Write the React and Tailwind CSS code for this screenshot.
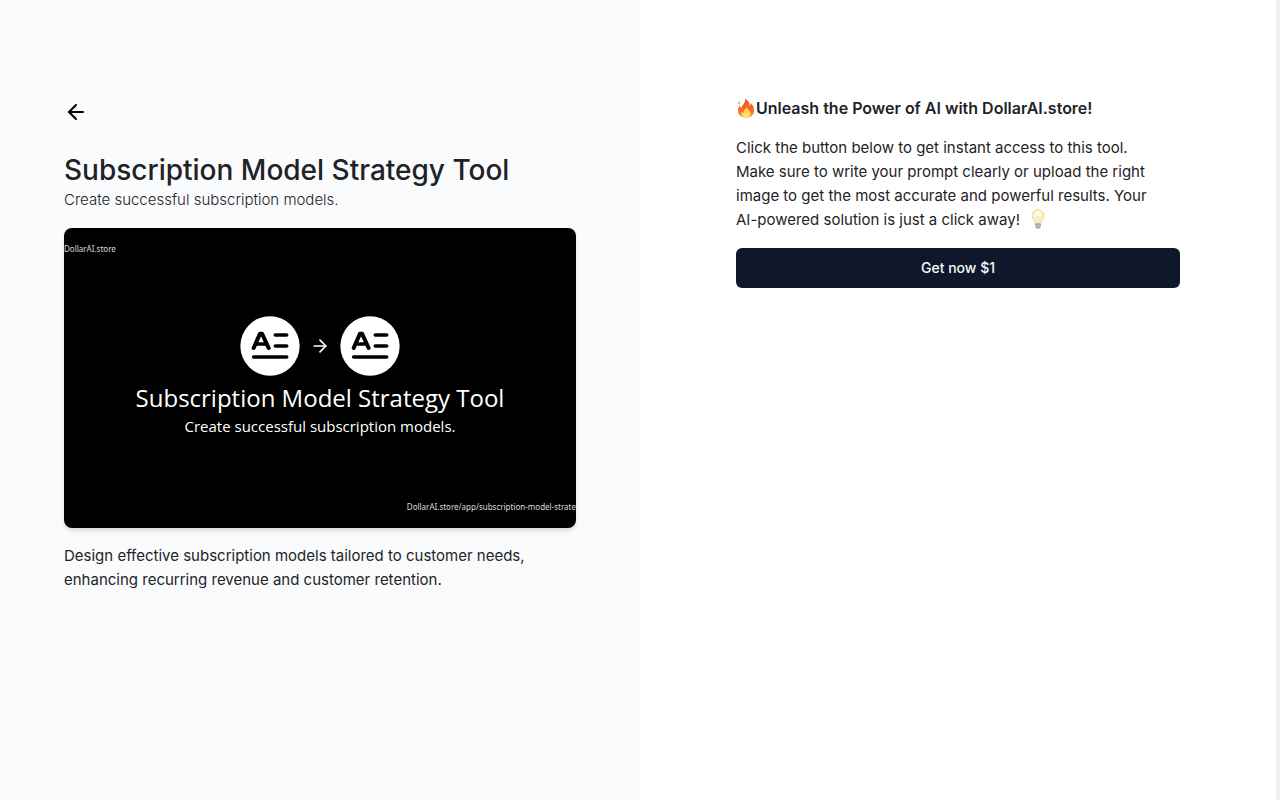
import React from "react";
import { ArrowLeft, ArrowRight } from "lucide-react";

function TextBadge() {
  return (
    <svg viewBox="0 0 180 180" className="size-[60px]" aria-hidden="true">
      <circle cx="90" cy="90" r="89" fill="#fff" />
      <g fill="none" stroke="#000" strokeWidth="11" strokeLinecap="round" strokeLinejoin="round">
        <path d="M41 96 L60 53 H66 L86 96" strokeWidth="12" />
        <path d="M48 84 H79" strokeWidth="10" />
        <path d="M106 57 H140 M106 90 H140 M41 123 H140" />
      </g>
    </svg>
  );
}

function Fire() {
  return (
    <svg viewBox="0 0 40 40" className="size-5 shrink-0" role="img" aria-label="fire">
      <defs>
        <linearGradient id="flame" x1="0" y1="0" x2="0" y2="1">
          <stop offset="0" stopColor="#e8502a" />
          <stop offset="0.6" stopColor="#f9682a" />
          <stop offset="1" stopColor="#fb9a2c" />
        </linearGradient>
        <linearGradient id="core" x1="0" y1="0" x2="0" y2="1">
          <stop offset="0" stopColor="#ffb62e" />
          <stop offset="1" stopColor="#fff07a" />
        </linearGradient>
      </defs>
      <path fill="url(#flame)" d="M18 1 C25 5 28 11 27 16 C29 15 30 12 29 9 C34 14 36 20 36 26 C36 34 29 39 20 39 C11 39 4 34 4 26 C4 21 6 17 8 14 C8 17 9 19 11 20 C12 13 20 10 18 1 Z" />
      <path fill="#ef6a3c" d="M6 7 C8 9 8 11 6 13 C4 11 4 9 6 7 Z" />
      <path fill="url(#core)" d="M21 17 C22 22 26 23 28 27 C31 33 27 38 20 38 C13 38 9 33 11 27 C12 29 13 30 15 30 C14 25 20 22 21 17 Z" />
    </svg>
  );
}

function Bulb() {
  return (
    <svg viewBox="0 0 40 40" className="ml-1 inline-block size-5 align-[-4px]" role="img" aria-label="light bulb">
      <path fill="#f7efb4" stroke="#ddd6ae" strokeWidth="1.5" d="M20 1 C12 1 8 7 8 13 C8 20 14 23 14 29 H26 C26 23 32 20 32 13 C32 7 28 1 20 1 Z" />
      <path fill="#fffbe0" d="M19 4 C14 5 12 9 12 13 C13 18 17 20 18 26 H22 C23 20 26 18 27 13 C27 8 24 4 19 4 Z" />
      <path fill="none" stroke="#e6d28c" strokeWidth="1" d="M16 15 L18 18 L20 15 L22 18 L24 15 M18 18 V28 M22 18 V28" />
      <path fill="#9a9c98" d="M14 29 H26 V35 L23 39 H17 L14 35 Z" />
      <path stroke="#d0d1ce" strokeWidth="1.5" d="M14 32 H26 M15 35 H25" />
    </svg>
  );
}

function Thumbnail() {
  return (
    <div className="mt-4 flex h-[300px] flex-col justify-between overflow-hidden rounded-lg bg-black py-[14px] font-['Noto_Sans',sans-serif] text-white shadow-md">
      <div className="text-[8px] leading-[14px] text-[#dddddd]">DollarAI.store</div>
      <div className="flex flex-col items-center pb-1">
        <div className="flex items-center gap-[10px]">
          <TextBadge />
          <ArrowRight className="size-5" />
          <TextBadge />
        </div>
        <div className="mt-1 font-['Open_Sans',sans-serif] text-[24px] leading-9 whitespace-nowrap">
          Subscription Model Strategy Tool
        </div>
        <div className="font-['Open_Sans',sans-serif] text-[15px] leading-5 whitespace-nowrap">
          Create successful subscription models.
        </div>
      </div>
      <div className="text-right text-[8px] leading-[14px] whitespace-nowrap text-[#dddddd]">
        DollarAI.store/app/subscription-model-strate
      </div>
    </div>
  );
}

export default function App() {
  return (
    <div className="flex min-h-screen bg-white font-[Inter,sans-serif] text-[15px] leading-6 text-[#1f2326]">
      <main className="w-1/2 bg-[#fafbfd] px-16 pt-24">
        <a href="#back" aria-label="Back" className="flex h-8 w-6 items-center text-black">
          <ArrowLeft className="size-6" />
        </a>
        <h1 className="mt-6 text-[28px] leading-9 font-medium">Subscription Model Strategy Tool</h1>
        <p className="font-light">Create successful subscription models.</p>
        <Thumbnail />
        <p className="mt-4">
          Design effective subscription models tailored to customer needs, enhancing recurring revenue and customer
          retention.
        </p>
      </main>
      <aside className="flex flex-1 flex-col gap-4 px-24 pt-24">
        <h2 className="flex items-center text-[16px] font-semibold">
          <Fire />
          Unleash the Power of AI with DollarAI.store!
        </h2>
        <p className="pr-4">
          Click the button below to get instant access to this tool. Make sure to write your prompt clearly or upload
          the right image to get the most accurate and powerful results. Your AI-powered solution is just a click
          away! <Bulb />
        </p>
        <button type="button" className="h-10 rounded-md bg-[#0f172a] text-[14px] font-medium text-[#f8fafc]">
          Get now $1
        </button>
      </aside>
      <div className="w-1 bg-[#f0f0f0]" />
    </div>
  );
}
